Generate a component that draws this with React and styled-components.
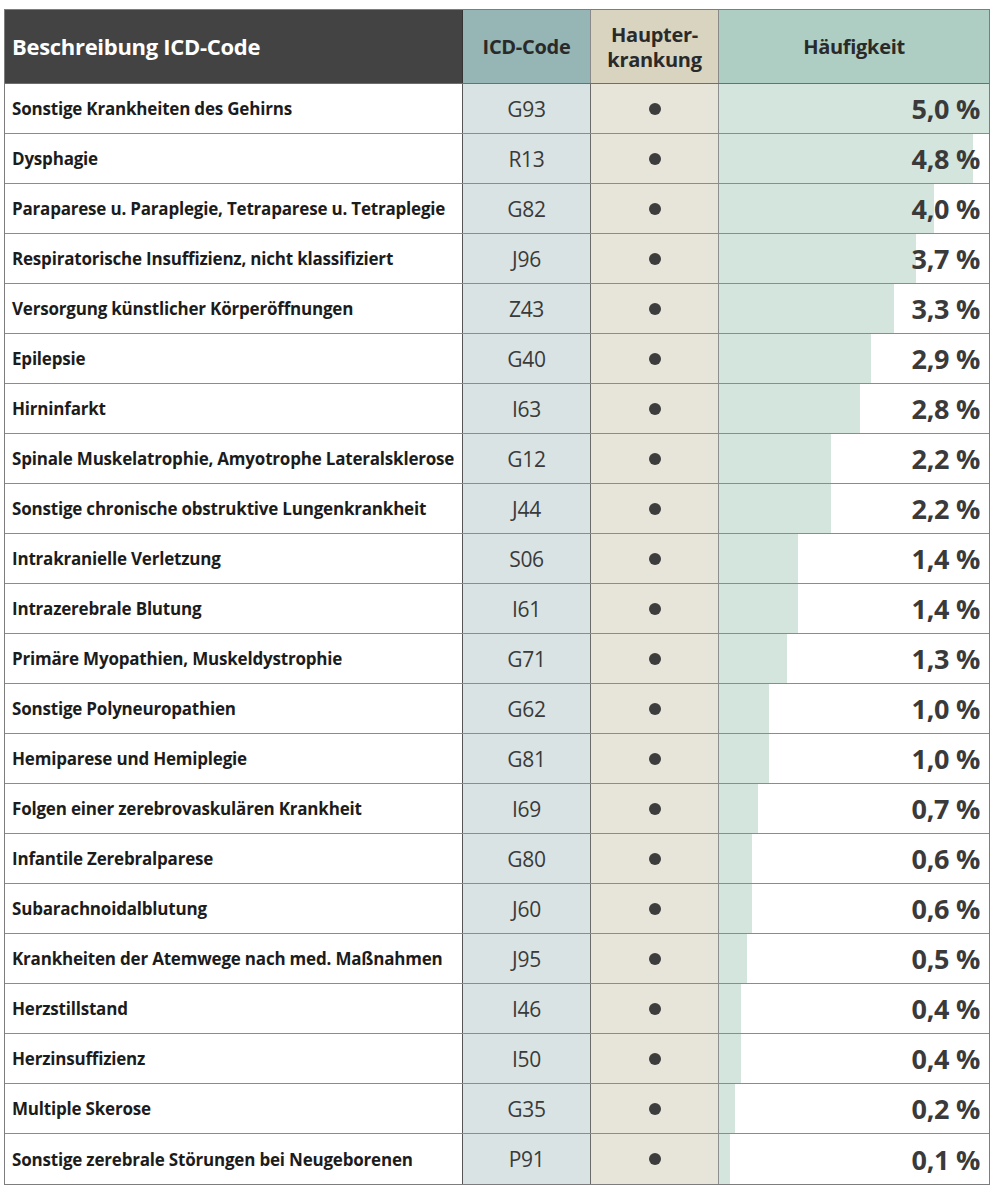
import React from "react";
import styled, { createGlobalStyle } from "styled-components";

const Global = createGlobalStyle`
  html, body { margin: 0; padding: 0; background: #ffffff; }
  body { font-family: "Open Sans", Lato, "Liberation Sans", sans-serif; }
`;

const Page = styled.div`
  padding: 9px 6px 4px 4px;
`;

const Table = styled.div`
  width: 986px;
  border: 1px solid #7d7d7d;
  box-sizing: border-box;
`;

const Grid = styled.div`
  display: grid;
  grid-template-columns: 458px 128px 128px 1fr;
`;

const HeadRow = styled(Grid)`
  height: 74px;
  border-bottom: 1px solid #6e6e6e;
  box-sizing: border-box;
`;

const HeadCell = styled.div`
  display: flex;
  flex-direction: column;
  align-items: ${(p) => (p.$left ? "flex-start" : "center")};
  justify-content: center;
  padding: ${(p) => (p.$left ? "0 0 0 7px" : "0")};
  background: ${(p) => p.$bg};
  color: ${(p) => p.$fg || "#2a2a2a"};
  font-weight: 700;
  font-size: ${(p) => p.$size || "20px"};
  line-height: 1.25;
  text-align: center;
  border-right: ${(p) => (p.$last ? "none" : `1px solid ${p.$bc || "#8a8a8a"}`)};
  box-sizing: border-box;
  letter-spacing: -0.3px;
`;

const HeadLine = styled.span`
  display: block;
  white-space: nowrap;
`;

const Row = styled(Grid)`
  height: 50px;
  border-bottom: ${(p) => (p.$last ? "none" : "1px solid #8c8c8c")};
  box-sizing: border-box;
`;

const DescCell = styled.div`
  display: flex;
  align-items: center;
  padding-left: 7px;
  font-weight: 700;
  font-size: 17px;
  color: #1c1c1c;
  background: #ffffff;
  border-right: 1px solid #555555;
  letter-spacing: -0.2px;
  white-space: nowrap;
`;

const CodeCell = styled.div`
  display: flex;
  align-items: center;
  justify-content: center;
  background: #d9e3e3;
  border-right: 1px solid #6a6a6a;
  font-size: 21px;
  color: #3a3a3a;
  letter-spacing: -0.3px;
`;

const DotCell = styled.div`
  display: flex;
  align-items: center;
  justify-content: center;
  background: #e7e4d9;
  border-right: 1px solid #8f8f8f;
`;

const Dot = styled.span`
  width: 12px;
  height: 12px;
  border-radius: 50%;
  background: #3d3d3d;
`;

const FreqCell = styled.div`
  display: flex;
  align-items: center;
  justify-content: flex-end;
  padding-right: 9px;
  font-weight: 700;
  font-size: 27px;
  color: #3a3a3a;
  letter-spacing: -0.3px;
  background: linear-gradient(
    to right,
    #d4e5dd 0,
    #d4e5dd ${(p) => p.$bar}px,
    #ffffff ${(p) => p.$bar}px
  );
`;

const rows = [
  ["Sonstige Krankheiten des Gehirns", "G93", "5,0 %", 272],
  ["Dysphagie", "R13", "4,8 %", 254],
  ["Paraparese u. Paraplegie, Tetraparese u. Tetraplegie", "G82", "4,0 %", 215],
  ["Respiratorische Insuffizienz, nicht klassifiziert", "J96", "3,7 %", 197],
  ["Versorgung künstlicher Körperöffnungen", "Z43", "3,3 %", 175],
  ["Epilepsie", "G40", "2,9 %", 152],
  ["Hirninfarkt", "I63", "2,8 %", 141],
  ["Spinale Muskelatrophie, Amyotrophe Lateralsklerose", "G12", "2,2 %", 112],
  ["Sonstige chronische obstruktive Lungenkrankheit", "J44", "2,2 %", 112],
  ["Intrakranielle Verletzung", "S06", "1,4 %", 79],
  ["Intrazerebrale Blutung", "I61", "1,4 %", 79],
  ["Primäre Myopathien, Muskeldystrophie", "G71", "1,3 %", 68],
  ["Sonstige Polyneuropathien", "G62", "1,0 %", 50],
  ["Hemiparese und Hemiplegie", "G81", "1,0 %", 50],
  ["Folgen einer zerebrovaskulären Krankheit", "I69", "0,7 %", 39],
  ["Infantile Zerebralparese", "G80", "0,6 %", 33],
  ["Subarachnoidalblutung", "J60", "0,6 %", 33],
  ["Krankheiten der Atemwege nach med. Maßnahmen", "J95", "0,5 %", 28],
  ["Herzstillstand", "I46", "0,4 %", 22],
  ["Herzinsuffizienz", "I50", "0,4 %", 22],
  ["Multiple Skerose", "G35", "0,2 %", 16],
  ["Sonstige zerebrale Störungen bei Neugeborenen", "P91", "0,1 %", 11],
];

export default function App() {
  return (
    <Page>
      <Global />
      <Table>
        <HeadRow>
          <HeadCell $left $bg="#434343" $fg="#ffffff" $size="22px" $bc="#333">
            Beschreibung ICD-Code
          </HeadCell>
          <HeadCell $bg="#96b5b5" $size="20px">ICD-Code</HeadCell>
          <HeadCell $bg="#d8d4c0" $size="20px">
            <HeadLine>Haupter-</HeadLine>
            <HeadLine>krankung</HeadLine>
          </HeadCell>
          <HeadCell $bg="#aecec3" $size="20px" $last>Häufigkeit</HeadCell>
        </HeadRow>
        {rows.map(([desc, code, freq, bar], i) => (
          <Row key={code + i} $last={i === rows.length - 1}>
            <DescCell>{desc}</DescCell>
            <CodeCell>{code}</CodeCell>
            <DotCell>
              <Dot />
            </DotCell>
            <FreqCell $bar={bar}>{freq}</FreqCell>
          </Row>
        ))}
      </Table>
    </Page>
  );
}
